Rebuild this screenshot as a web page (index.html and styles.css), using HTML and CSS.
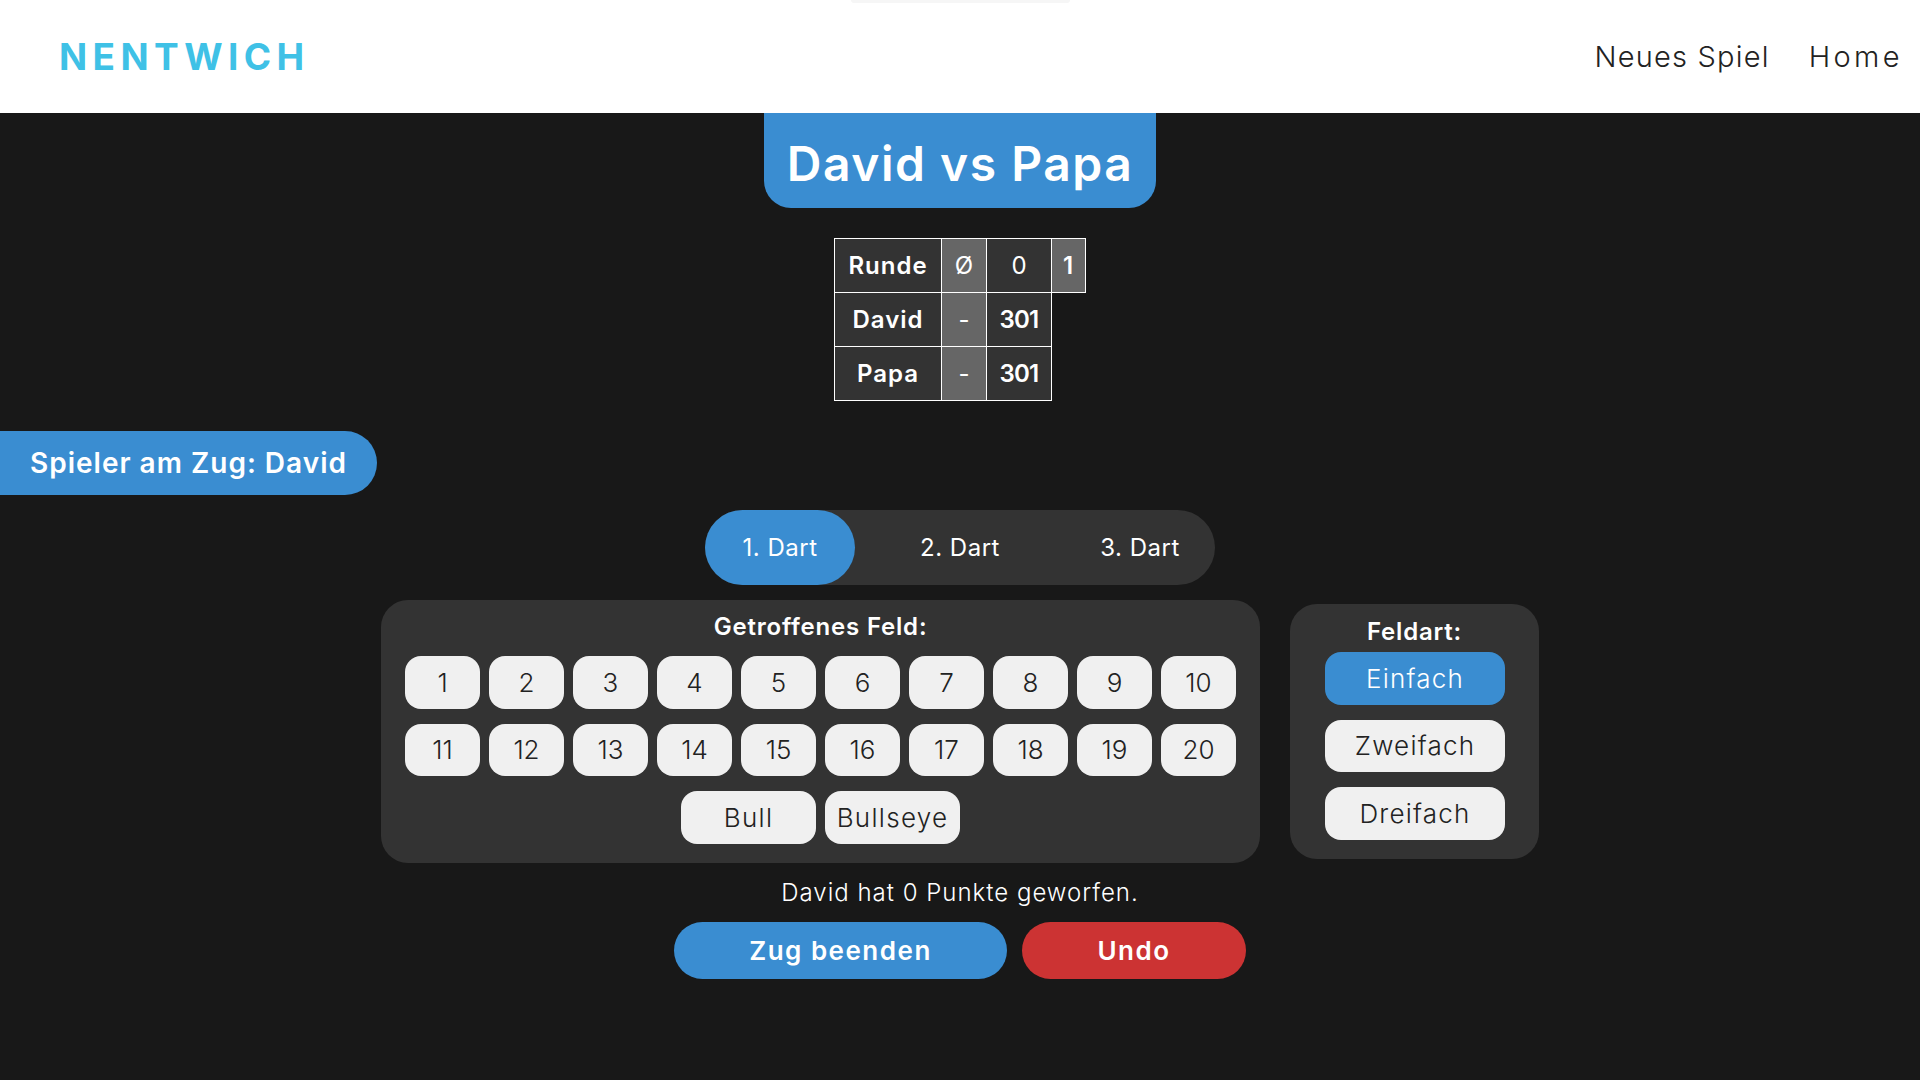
FILE: index.html
```html
<!DOCTYPE html>
<html lang="en">

<head>
  <meta charset="UTF-8">
  <meta name="viewport" content="width=device-width, initial-scale=1.0">
  <title>Darts</title>
  <link rel="stylesheet" href="styles.css">
</head>

<body>
  <header class="top-bar">
    <div class="top-notch"></div>
    <a class="logo">NENTWICH</a>
    <nav class="top-nav">
      <a>Neues Spiel</a>
      <a class="nav-home">Home</a>
    </nav>
  </header>

  <main class="game">
    <h1 class="game-title">David vs Papa</h1>

    <table class="score-table">
      <tr>
        <th class="col-name">Runde</th>
        <td class="col-avg">Ø</td>
        <td class="col-score plain">0</td>
        <th class="col-round">1</th>
      </tr>
      <tr>
        <th class="col-name">David</th>
        <td class="col-avg">-</td>
        <th class="col-score">301</th>
      </tr>
      <tr>
        <th class="col-name">Papa</th>
        <td class="col-avg">-</td>
        <th class="col-score">301</th>
      </tr>
    </table>

    <div class="current-player">Spieler am Zug: David</div>

    <div class="dart-tabs">
      <button class="dart-tab active">1. Dart</button>
      <button class="dart-tab">2. Dart</button>
      <button class="dart-tab">3. Dart</button>
    </div>

    <div class="input-row">
      <section class="panel field-panel">
        <h3 class="panel-title">Getroffenes Feld:</h3>
        <div class="field-grid">
          <button class="key">1</button>
          <button class="key">2</button>
          <button class="key">3</button>
          <button class="key">4</button>
          <button class="key">5</button>
          <button class="key">6</button>
          <button class="key">7</button>
          <button class="key">8</button>
          <button class="key">9</button>
          <button class="key">10</button>
          <button class="key">11</button>
          <button class="key">12</button>
          <button class="key">13</button>
          <button class="key">14</button>
          <button class="key">15</button>
          <button class="key">16</button>
          <button class="key">17</button>
          <button class="key">18</button>
          <button class="key">19</button>
          <button class="key">20</button>
          <button class="key wide">Bull</button>
          <button class="key wide">Bullseye</button>
        </div>
      </section>

      <section class="panel type-panel">
        <h3 class="panel-title">Feldart:</h3>
        <button class="key type-key active">Einfach</button>
        <button class="key type-key">Zweifach</button>
        <button class="key type-key">Dreifach</button>
      </section>
    </div>

    <p class="message">David hat 0 Punkte geworfen.</p>

    <div class="actions">
      <button class="action end-turn">Zug beenden</button>
      <button class="action undo">Undo</button>
    </div>
  </main>
</body>

</html>
```

FILE: styles.css
```css
* {
  margin: 0px;
  padding: 0px;
  box-sizing: border-box;
  font-family: Inter, "Liberation Sans", sans-serif;
}

body {
  min-height: 100vh;
  background: #181818;
  color: white;
  overflow: hidden;
}

.top-bar {
  height: 113px;
  background: white;
  display: flex;
  justify-content: space-between;
  align-items: center;
  padding: 0 17px 0 59px;
}

.top-notch {
  position: absolute;
  top: 0;
  left: 851px;
  width: 219px;
  height: 3px;
  background: #f6f6f6;
  border-radius: 0 0 8px 8px;
}

.logo {
  font-size: 37px;
  font-weight: 700;
  letter-spacing: 5.4px;
  color: #3fc1e6;
}

.top-nav {
  display: flex;
  gap: 39px;
}

.top-nav a {
  font-size: 29px;
  font-weight: 300;
  letter-spacing: 1.2px;
  color: #222;
}

.top-nav .nav-home {
  letter-spacing: 3.4px;
}

.game {
  display: flex;
  flex-direction: column;
  align-items: center;
}

.game-title {
  width: 392px;
  height: 95px;
  background: #3a8dd1;
  border-radius: 0 0 27px 27px;
  font-size: 48px;
  font-weight: 600;
  letter-spacing: 1.5px;
  line-height: 101px;
  text-align: center;
}

.score-table {
  margin-top: 30px;
  border-collapse: collapse;
  table-layout: fixed;
  font-size: 24px;
}

.score-table th,
.score-table td {
  height: 54px;
  border: 1px solid white;
  text-align: center;
  background: #333;
}

.score-table th {
  font-weight: 600;
  letter-spacing: 1px;
}

.score-table td {
  font-weight: 400;
}

.col-name {
  width: 107px;
}

.score-table .col-avg {
  width: 45px;
  background: #666;
}

.col-score {
  width: 65px;
}

.score-table th.col-score {
  letter-spacing: -0.8px;
}

.score-table .col-round {
  width: 34px;
  background: #666;
}

.current-player {
  align-self: flex-start;
  margin-top: 30px;
  width: 377px;
  height: 64px;
  padding-left: 30px;
  background: #3a8dd1;
  border-radius: 0 32px 32px 0;
  font-size: 28px;
  font-weight: 600;
  letter-spacing: 1px;
  line-height: 64px;
}

.dart-tabs {
  margin-top: 15px;
  display: flex;
  gap: 30px;
  background: #333;
  border-radius: 38px;
}

.dart-tab {
  width: 150px;
  height: 75px;
  border: none;
  border-radius: 38px;
  background: none;
  color: white;
  font-size: 24px;
  letter-spacing: 0.5px;
}

.dart-tab.active {
  background: #3a8dd1;
}

.input-row {
  margin-top: 15px;
  display: flex;
  align-items: center;
  gap: 30px;
}

.panel {
  background: #333;
  border-radius: 27px;
}

.panel-title {
  font-size: 24px;
  font-weight: 600;
  letter-spacing: 0.8px;
  line-height: 30px;
  text-align: center;
}

.field-panel {
  padding: 12px 24px 19px;
}

.field-grid {
  margin-top: 14px;
  width: 831px;
  display: flex;
  flex-wrap: wrap;
  justify-content: center;
  gap: 15px 9px;
}

.key {
  width: 75px;
  height: 52.5px;
  border: none;
  border-radius: 16px;
  background: #f0f0f0;
  color: #222;
  font-size: 26px;
  font-weight: 300;
}

.key.wide {
  width: 135px;
  letter-spacing: 1.3px;
}

.type-panel {
  width: 249px;
  padding: 13px 35px 19px;
  display: flex;
  flex-direction: column;
  gap: 15px;
}

.type-panel .panel-title {
  margin-bottom: -10px;
}

.type-key {
  width: 180px;
  letter-spacing: 1.2px;
}

.type-key.active {
  background: #3a8dd1;
  color: white;
}

.message {
  margin-top: 15px;
  font-size: 24px;
  font-weight: 300;
  letter-spacing: 1px;
  line-height: 29px;
}

.actions {
  margin-top: 15px;
  display: flex;
  gap: 15px;
}

.action {
  height: 57px;
  border: none;
  border-radius: 29px;
  color: white;
  font-size: 26px;
  font-weight: 600;
  letter-spacing: 1.5px;
}

.end-turn {
  width: 333px;
  background: #3a8dd1;
}

.undo {
  width: 224px;
  background: #cc3333;
}
```
